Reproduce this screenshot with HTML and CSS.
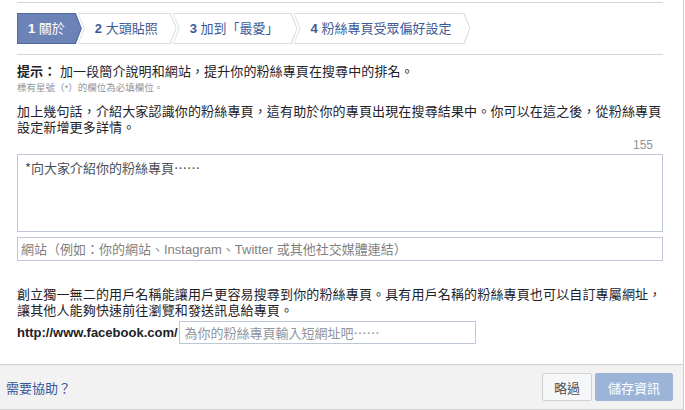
FILE: index.html
```html
<!DOCTYPE html>
<html lang="zh-Hant">
<head>
<meta charset="utf-8">
<title>粉絲專頁設定</title>
<link rel="stylesheet" href="styles.css">
</head>
<body>
<div class="dialog">
  <div class="content">
    <div class="steps">
      <div class="step active"><span class="label"><b>1</b> 關於</span></div>
      <div class="step"><span class="label"><b>2</b> 大頭貼照</span></div>
      <div class="step"><span class="label"><b>3</b> 加到「最愛」</span></div>
      <div class="step"><span class="label"><b>4</b> 粉絲專頁受眾偏好設定</span></div>
    </div>
    <p class="tip"><b>提示：</b> 加一段簡介說明和網站，提升你的粉絲專頁在搜尋中的排名。</p>
    <p class="required">標有星號（*）的欄位為必填欄位。</p>
    <p class="para first">加上幾句話，介紹大家認識你的粉絲專頁，這有助於你的專頁出現在搜尋結果中。你可以在這之後，從粉絲專頁<br>設定新增更多詳情。</p>
    <div class="counter">155</div>
    <textarea class="about" placeholder="*向大家介紹你的粉絲專頁……"></textarea>
    <input class="website" type="text" placeholder="網站（例如：你的網站、Instagram、Twitter 或其他社交媒體連結）">
    <p class="para second">創立獨一無二的用戶名稱能讓用戶更容易搜尋到你的粉絲專頁。具有用戶名稱的粉絲專頁也可以自訂專屬網址，<br>讓其他人能夠快速前往瀏覽和發送訊息給專頁。</p>
    <div class="url-row">
      <span class="url-label">http://www.facebook.com/</span>
      <input class="url-input" type="text" placeholder="為你的粉絲專頁輸入短網址吧……">
    </div>
  </div>
  <div class="footer">
    <a class="help" href="#">需要協助？</a>
    <div class="actions">
      <button class="btn skip" type="button">略過</button>
      <button class="btn save" type="button">儲存資訊</button>
    </div>
  </div>
</div>
</body>
</html>
```

FILE: styles.css
```css
* { box-sizing: border-box; }

html, body {
  margin: 0;
  padding: 0;
  background: #fff;
}

body {
  font-family: "Liberation Sans", "Noto Sans CJK TC", sans-serif;
  font-size: 13px;
  color: #1d2129;
}

.dialog {
  width: 684px;
  height: 410px;
  border-right: 1px solid #cfcfcf;
  display: flex;
  flex-direction: column;
}

.content {
  padding: 2px 20px 0 17px;
  flex: 1;
}

.steps {
  display: flex;
  border-top: 1px solid #d4d4d4;
  border-bottom: 1px solid #d4d4d4;
  padding: 10px 0;
}

.step {
  position: relative;
  display: flex;
  align-items: center;
  height: 31px;
  padding: 0 19px 0 17px;
  margin-left: -4px;
  color: #3b5998;
  font-size: 13px;
}

.step:first-child {
  margin-left: 0;
  padding-left: 11px;
  padding-right: 17px;
}

.step::before,
.step::after {
  content: "";
  position: absolute;
  clip-path: polygon(0 0, calc(100% - 6px) 0, 100% 50%, calc(100% - 6px) 100%, 0 100%, 6px 50%);
}

.step::before {
  inset: 0;
  background: #d9dde7;
}

.step::after {
  inset: 1px;
  background: #fff;
}

.step:first-child::before,
.step:first-child::after {
  clip-path: polygon(0 0, calc(100% - 6px) 0, 100% 50%, calc(100% - 6px) 100%, 0 100%);
}

.step.active { color: #fff; }
.step.active::before { background: #4e69a2; }
.step.active::after { background: #6b83b6; }

.label {
  position: relative;
  z-index: 1;
  white-space: nowrap;
  line-height: 16px;
}

.label b { font-weight: bold; }

p { margin: 0; }

.tip {
  margin-top: 9px;
  line-height: 16px;
  letter-spacing: 0.1px;
}

.tip b { font-weight: bold; }

.required {
  margin-top: 1px;
  font-size: 9.5px;
  line-height: 14px;
  color: #90949c;
}

.para {
  line-height: 16px;
  letter-spacing: 0.15px;
}

.para.first { margin-top: 9px; }
.para.second { margin-top: 26px; }

.counter {
  margin-top: 2px;
  text-align: right;
  padding-right: 10px;
  font-size: 12px;
  line-height: 14px;
  color: #90949c;
}

.about,
.website,
.url-input {
  display: block;
  font-family: "Liberation Sans", "Noto Sans CJK TC", sans-serif;
  font-size: 13px;
  color: #1d2129;
  border: 1px solid #bdc7d8;
  background: #fff;
  margin: 0;
  outline: none;
}

.about,
.url-input {
  font-family: "Noto Sans CJK TC", "Liberation Sans", sans-serif;
}

.about {
  margin-top: 2px;
  width: 100%;
  height: 78px;
  padding: 5px 7px;
  line-height: 16px;
  resize: none;
}

.about::placeholder { color: #4b4f56; opacity: 1; }

.website {
  margin-top: 5px;
  width: 100%;
  height: 24px;
  padding: 0 3px;
}

.website::placeholder { color: #7f7f7f; opacity: 1; }

.url-row {
  margin-top: 2px;
  display: flex;
  align-items: center;
}

.url-label {
  font-size: 13px;
  font-weight: bold;
  color: #1d2129;
}

.url-input {
  width: 297px;
  height: 23px;
  padding: 0 5px;
  margin-left: 1px;
}

.url-input::placeholder { color: #90949c; opacity: 1; }

.footer {
  height: 46px;
  background: #f2f2f2;
  border-top: 1px solid #cfcfcf;
  border-bottom: 1px solid #cfcfcf;
  display: flex;
  align-items: center;
  justify-content: space-between;
  padding: 0 10px 0 6px;
}

.help {
  color: #365899;
  text-decoration: none;
  font-size: 13px;
}

.actions {
  display: flex;
  gap: 3px;
}

.btn {
  height: 28px;
  border-radius: 2px;
  font-family: "Liberation Sans", "Noto Sans CJK TC", sans-serif;
  font-size: 13px;
  padding: 0 11px;
  cursor: pointer;
}

.btn.skip {
  background: #f6f7f9;
  border: 1px solid #ced0d4;
  color: #4b4f56;
}

.btn.save {
  background: #9cb4d8;
  border: 1px solid #9cb4d8;
  color: #fff;
  padding: 0 12px;
}
```
